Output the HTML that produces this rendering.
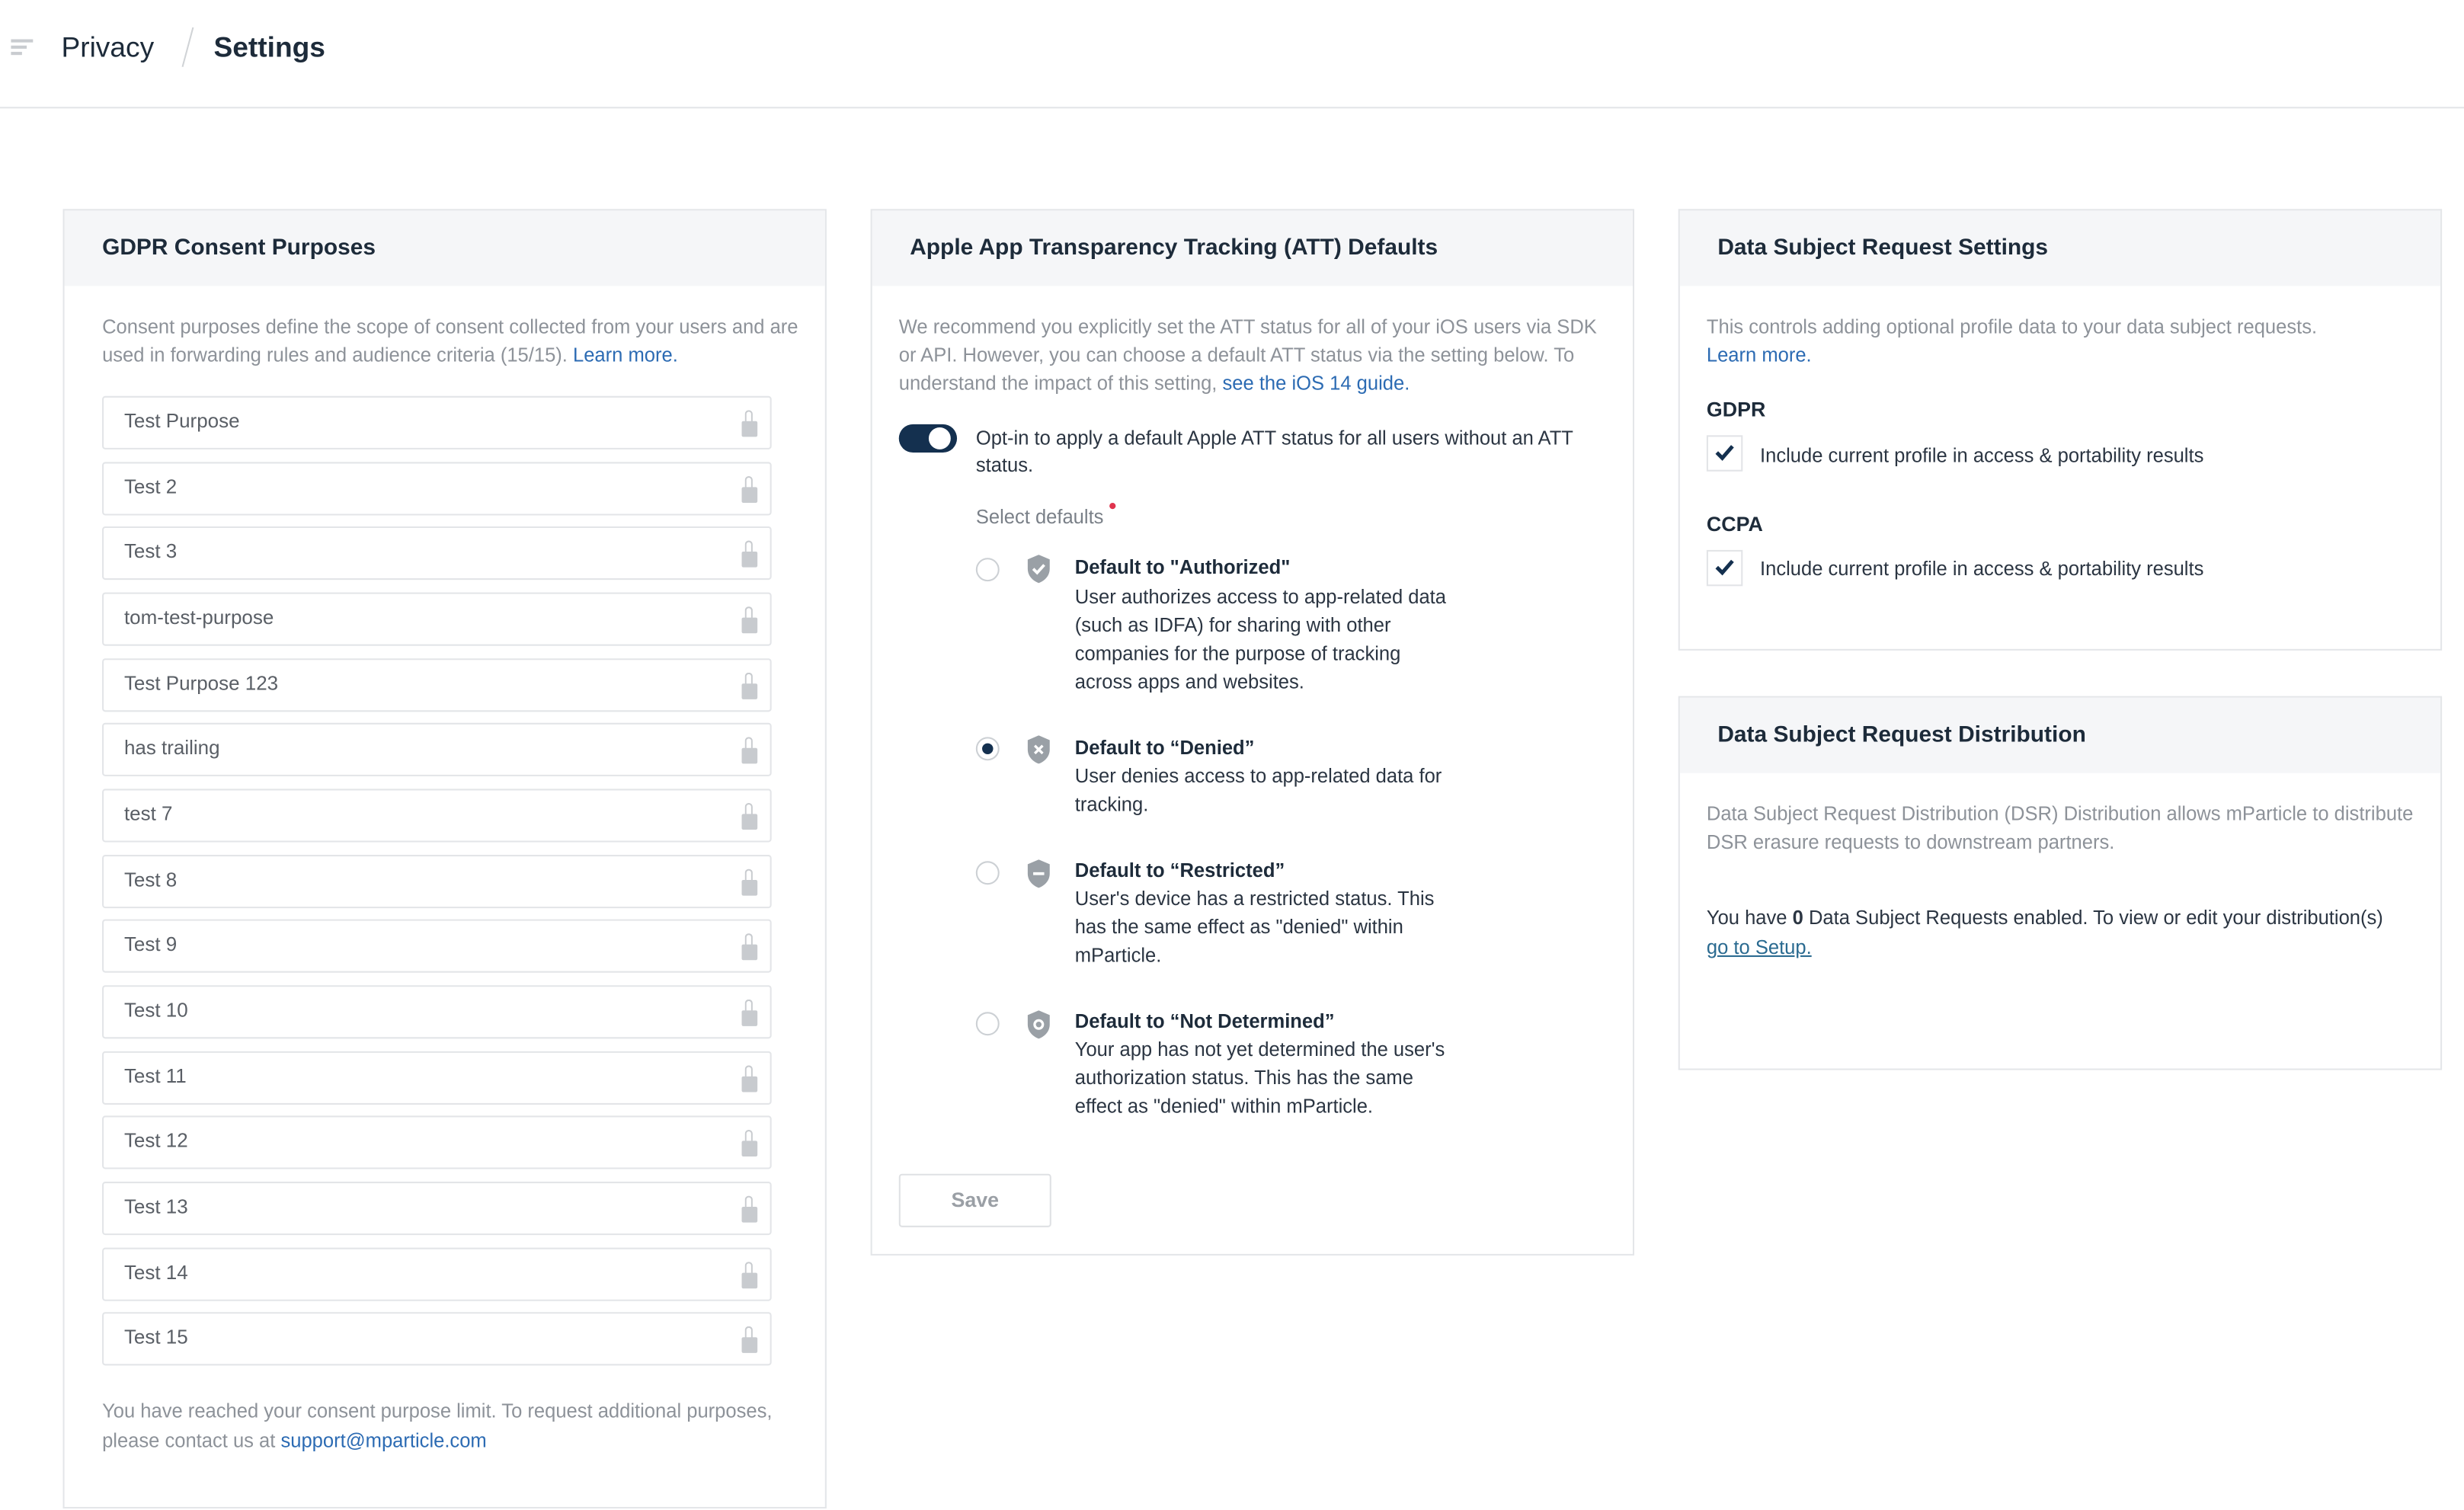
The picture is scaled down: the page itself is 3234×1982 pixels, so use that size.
<!DOCTYPE html>
<html><head><meta charset="utf-8"><style>
html,body{margin:0;padding:0;background:#fff;}
body{width:3234px;height:1982px;overflow:hidden;position:relative;}
#z{position:absolute;left:0;top:0;width:1568px;height:961px;transform:scale(2.0625);transform-origin:0 0;font-family:"Liberation Sans",sans-serif;color:#1d2b3a;}
.a{position:absolute;white-space:nowrap;line-height:18px;margin-top:1px;}
.g{color:#8d9299;font-size:12.4px;}
.d{color:#2b3542;font-size:12.4px;}
.l{color:#2c6bb3;}
.card{position:absolute;border:1px solid #e4e6e9;background:#fff;box-sizing:border-box;}
.hd{position:absolute;left:0;right:0;top:0;height:48px;background:#f5f6f8;}
.ti{font-size:14.5px;font-weight:bold;color:#1d2b3a;}
.inp{position:absolute;left:65px;width:426px;height:34px;border:1px solid #e3e5e8;box-sizing:border-box;border-radius:2px;}
.inp span{position:absolute;left:13px;top:8px;font-size:12.6px;color:#5a5f66;}
.rad{position:absolute;left:621px;width:15px;height:15px;border:1px solid #ccd0d4;border-radius:50%;box-sizing:border-box;}
.b{font-weight:bold;color:#1d2b3a;}
.cb{position:absolute;left:1086px;width:23px;height:23px;border:1px solid #e2e4e7;box-sizing:border-box;}
</style></head><body><div id="z">
<div style="position:absolute;left:7px;top:25px;width:14px;height:2px;background:#c9ccd0"></div>
<div style="position:absolute;left:7px;top:29px;width:10px;height:2px;background:#c9ccd0"></div>
<div style="position:absolute;left:7px;top:33px;width:7px;height:2px;background:#c9ccd0"></div>
<div class="a" style="left:39px;top:17px;font-size:18px;line-height:24px;color:#1d2b3a">Privacy</div>
<div style="position:absolute;left:119px;top:17px;width:1px;height:26px;background:#d0d3d6;transform:rotate(15deg)"></div>
<div class="a" style="left:136px;top:17px;font-size:18px;line-height:24px;font-weight:bold;color:#1d2b3a">Settings</div>
<div style="position:absolute;left:0;right:0;top:68px;height:1px;background:#e3e5e8"></div>

<div class="card" style="left:40px;top:133px;width:486px;height:827px"><div class="hd"></div></div>
<div class="a ti" style="left:65px;top:148px">GDPR Consent Purposes</div>
<div class="a g" style="left:65px;top:198px">Consent purposes define the scope of consent collected from your users and are</div>
<div class="a g" style="left:65px;top:216px">used in forwarding rules and audience criteria (15/15). <span class="l">Learn more.</span></div>
<div class="a g" style="left:65px;top:888px">You have reached your consent purpose limit. To request additional purposes,</div>
<div class="a g" style="left:65px;top:907px">please contact us at <span class="l">support@mparticle.com</span></div>

<div class="card" style="left:554px;top:133px;width:486px;height:666px"><div class="hd"></div></div>
<div class="a ti" style="left:579px;top:148px">Apple App Transparency Tracking (ATT) Defaults</div>
<div class="a g" style="left:572px;top:198px">We recommend you explicitly set the ATT status for all of your iOS users via SDK</div>
<div class="a g" style="left:572px;top:216px">or API. However, you can choose a default ATT status via the setting below. To</div>
<div class="a g" style="left:572px;top:234px">understand the impact of this setting, <span class="l">see the iOS 14 guide.</span></div>
<div style="position:absolute;left:572px;top:270px;width:37px;height:18px;border-radius:9px;background:#14304f"></div>
<div style="position:absolute;left:591px;top:272px;width:14px;height:14px;border-radius:50%;background:#fff"></div>
<div class="a d" style="left:621px;top:269px">Opt-in to apply a default Apple ATT status for all users without an ATT</div>
<div class="a d" style="left:621px;top:286px">status.</div>
<div class="a g" style="left:621px;top:319px;color:#7a8088">Select defaults</div>
<div style="position:absolute;left:706px;top:320px;width:4px;height:4px;border-radius:50%;background:#e0344e"></div>

<div class="rad" style="top:355px"></div>
<div class="rad" style="top:469px"><div style="position:absolute;left:3px;top:3px;width:7px;height:7px;border-radius:50%;background:#14304f"></div></div>
<div class="rad" style="top:548px"></div>
<div class="rad" style="top:644px"></div>

<svg style="position:absolute;left:653px;top:353px" width="16" height="19" viewBox="0 0 16 19"><path d="M8 0L15 3V9C15 14 11 17 8 18C5 17 1 14 1 9V3Z" fill="#9aa0a6"/><path d="M4.5 9L7 11.5L11.5 6.5" stroke="#fff" stroke-width="1.8" fill="none"/></svg>
<svg style="position:absolute;left:653px;top:468px" width="16" height="19" viewBox="0 0 16 19"><path d="M8 0L15 3V9C15 14 11 17 8 18C5 17 1 14 1 9V3Z" fill="#9aa0a6"/><path d="M5.5 6.5L10.5 11.5M10.5 6.5L5.5 11.5" stroke="#fff" stroke-width="1.6"/></svg>
<svg style="position:absolute;left:653px;top:547px" width="16" height="19" viewBox="0 0 16 19"><path d="M8 0L15 3V9C15 14 11 17 8 18C5 17 1 14 1 9V3Z" fill="#9aa0a6"/><path d="M4.5 9H11.5" stroke="#fff" stroke-width="1.8"/></svg>
<svg style="position:absolute;left:653px;top:643px" width="16" height="19" viewBox="0 0 16 19"><path d="M8 0L15 3V9C15 14 11 17 8 18C5 17 1 14 1 9V3Z" fill="#9aa0a6"/><circle cx="8" cy="9" r="2.6" stroke="#fff" stroke-width="1.6" fill="none"/></svg>

<div class="a d b" style="left:684px;top:351px">Default to "Authorized"</div>
<div class="a d" style="left:684px;top:370px">User authorizes access to app-related data</div>
<div class="a d" style="left:684px;top:388px">(such as IDFA) for sharing with other</div>
<div class="a d" style="left:684px;top:406px">companies for the purpose of tracking</div>
<div class="a d" style="left:684px;top:424px">across apps and websites.</div>
<div class="a d b" style="left:684px;top:466px">Default to “Denied”</div>
<div class="a d" style="left:684px;top:484px">User denies access to app-related data for</div>
<div class="a d" style="left:684px;top:502px">tracking.</div>
<div class="a d b" style="left:684px;top:544px">Default to “Restricted”</div>
<div class="a d" style="left:684px;top:562px">User's device has a restricted status. This</div>
<div class="a d" style="left:684px;top:580px">has the same effect as "denied" within</div>
<div class="a d" style="left:684px;top:598px">mParticle.</div>
<div class="a d b" style="left:684px;top:640px">Default to “Not Determined”</div>
<div class="a d" style="left:684px;top:658px">Your app has not yet determined the user's</div>
<div class="a d" style="left:684px;top:676px">authorization status. This has the same</div>
<div class="a d" style="left:684px;top:694px">effect as "denied" within mParticle.</div>
<div style="position:absolute;left:572px;top:747px;width:97px;height:34px;border:1px solid #dfe1e4;box-sizing:border-box;border-radius:2px;text-align:center;line-height:32px;font-size:13px;font-weight:bold;color:#9a9fa5">Save</div>

<div class="card" style="left:1068px;top:133px;width:486px;height:281px"><div class="hd"></div></div>
<div class="a ti" style="left:1093px;top:148px">Data Subject Request Settings</div>
<div class="a g" style="left:1086px;top:198px">This controls adding optional profile data to your data subject requests.</div>
<div class="a g l" style="left:1086px;top:216px">Learn more.</div>
<div class="a b" style="left:1086px;top:251px;font-size:13px">GDPR</div>
<div class="cb" style="top:277px"></div>
<div class="a d" style="left:1120px;top:280px">Include current profile in access &amp; portability results</div>
<div class="a b" style="left:1086px;top:324px;font-size:13px">CCPA</div>
<div class="cb" style="top:350px"></div>
<div class="a d" style="left:1120px;top:352px">Include current profile in access &amp; portability results</div>
<svg style="position:absolute;left:1091px;top:282px" width="13" height="12" viewBox="0 0 13 12"><path d="M1.5 6L5 9.5L11.5 2" stroke="#14304f" stroke-width="2.4" fill="none"/></svg>
<svg style="position:absolute;left:1091px;top:355px" width="13" height="12" viewBox="0 0 13 12"><path d="M1.5 6L5 9.5L11.5 2" stroke="#14304f" stroke-width="2.4" fill="none"/></svg>

<div class="card" style="left:1068px;top:443px;width:486px;height:238px"><div class="hd"></div></div>
<div class="a ti" style="left:1093px;top:458px">Data Subject Request Distribution</div>
<div class="a g" style="left:1086px;top:508px">Data Subject Request Distribution (DSR) Distribution allows mParticle to distribute</div>
<div class="a g" style="left:1086px;top:526px">DSR erasure requests to downstream partners.</div>
<div class="a d" style="left:1086px;top:574px">You have <b>0</b> Data Subject Requests enabled. To view or edit your distribution(s)</div>
<div class="a d" style="left:1086px;top:593px;color:#2a6a90;text-decoration:underline">go to Setup.</div>

<div class="inp" style="top:252px"><span>Test Purpose</span></div>
<div class="inp" style="top:293.6px"><span>Test 2</span></div>
<div class="inp" style="top:335.3px"><span>Test 3</span></div>
<div class="inp" style="top:377px"><span>tom-test-purpose</span></div>
<div class="inp" style="top:418.6px"><span>Test Purpose 123</span></div>
<div class="inp" style="top:460.3px"><span>has trailing</span></div>
<div class="inp" style="top:502px"><span>test 7</span></div>
<div class="inp" style="top:543.6px"><span>Test 8</span></div>
<div class="inp" style="top:585.3px"><span>Test 9</span></div>
<div class="inp" style="top:627px"><span>Test 10</span></div>
<div class="inp" style="top:668.6px"><span>Test 11</span></div>
<div class="inp" style="top:710.3px"><span>Test 12</span></div>
<div class="inp" style="top:752px"><span>Test 13</span></div>
<div class="inp" style="top:793.6px"><span>Test 14</span></div>
<div class="inp" style="top:835.3px"><span>Test 15</span></div>
<style>.inp::after{content:"";position:absolute;left:406px;top:15px;width:10px;height:10px;background:#c8cbcf;border-radius:1px}.inp::before{content:"";position:absolute;left:408px;top:8px;width:3px;height:7px;border:1.5px solid #c8cbcf;border-bottom:none;border-radius:3px 3px 0 0}</style>
</div></body></html>
